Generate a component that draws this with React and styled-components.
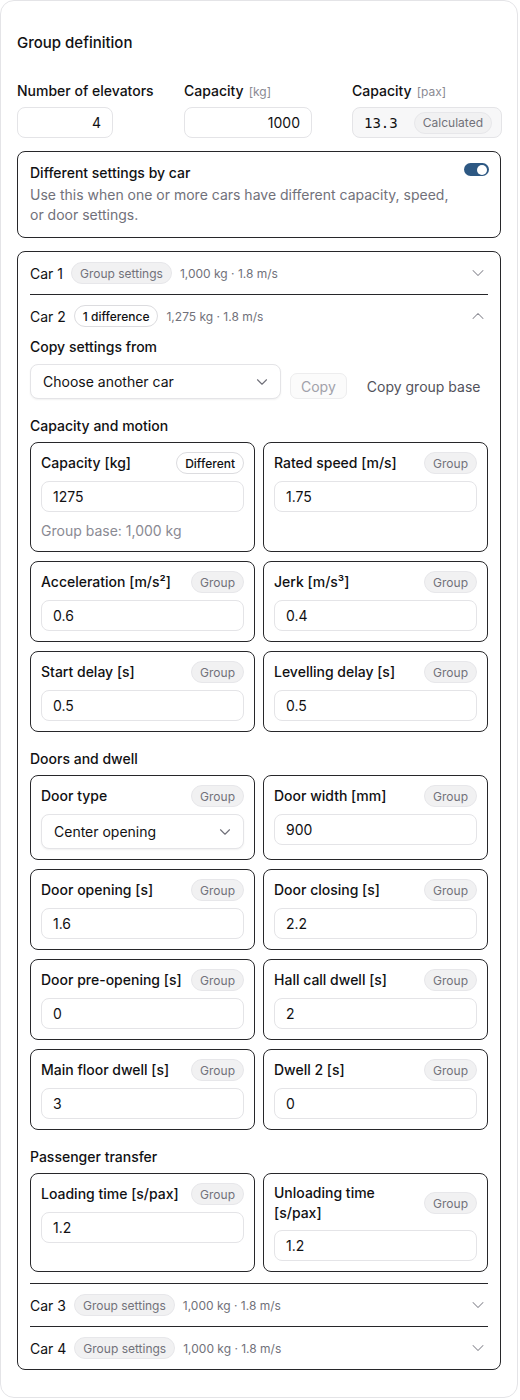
import React, { useState } from 'react';
import styled, { createGlobalStyle } from 'styled-components';
import { ChevronDown, ChevronUp } from 'lucide-react';

const GlobalStyle = createGlobalStyle`
    * { box-sizing: border-box; }
    body {
        margin: 0;
        background: #ffffff;
        font-family: Inter, "Noto Sans", "Liberation Sans", sans-serif;
        color: #111113;
    }
`

const Panel = styled.section`
    width: 518px;
    border: 1px solid #e4e4e7;
    border-radius: 14px;
    background: #ffffff;
    padding: 32px 16px 27px;
    display: flex;
    flex-direction: column;
`

const Title = styled.h2`
    margin: 0;
    font-size: 15px;
    line-height: 20px;
    font-weight: 500;
`

const TopFields = styled.div`
    display: grid;
    grid-template-columns: 150px 151px 150px;
    column-gap: 17px;
    margin-top: 28px;
`

const TopField = styled.div`
    display: flex;
    flex-direction: column;
    gap: 6px;
`

const TopLabel = styled.label`
    font-size: 14px;
    line-height: 20px;
    font-weight: 500;
    white-space: nowrap;
`

const Unit = styled.span`
    font-size: 12px;
    line-height: 1;
    font-weight: 400;
    color: #8a8a93;
    margin-left: 5px;
`

const NumberBox = styled.input`
    width: ${p => p.$w}px;
    height: 31px;
    border: 1px solid #e4e4e7;
    border-radius: 8px;
    padding: 0 11px;
    font: inherit;
    font-size: 14px;
    color: #111113;
    text-align: right;
    background: #fff;
    outline: none;
`

const ReadOnlyBox = styled.div`
    height: 31px;
    border: 1px solid #e4e4e7;
    border-radius: 8px;
    background: #f7f7f8;
    padding: 0 9px 0 11px;
    display: flex;
    align-items: center;
    justify-content: space-between;
`

const Mono = styled.span`
    font-family: "DejaVu Sans Mono", "Liberation Mono", monospace;
    font-size: 14px;
`

const ToggleCard = styled.div`
    margin-top: 13px;
    border: 1px solid #27272a;
    border-radius: 8px;
    padding: 11px 11px 12px 12px;
    display: flex;
    gap: 12px;
    align-items: flex-start;
`

const ToggleText = styled.div`
    flex: 1;
    display: flex;
    flex-direction: column;
    gap: 2px;
`

const StrongLine = styled.div`
    font-size: 14px;
    line-height: 20px;
    font-weight: 500;
`

const Muted = styled.div`
    font-size: 14px;
    line-height: 20px;
    color: #71717a;
`

const Switch = styled.button`
    width: 25px;
    height: 13px;
    padding: 0;
    border: none;
    border-radius: 999px;
    background: ${p => (p.$on ? '#2d5883' : '#d4d4d8')};
    display: flex;
    align-items: center;
    justify-content: ${p => (p.$on ? 'flex-end' : 'flex-start')};
    cursor: pointer;
    &::after {
        content: '';
        width: 10px;
        height: 10px;
        margin: 0 2px;
        border-radius: 50%;
        background: #fff;
    }
`

const CarList = styled.div`
    margin-top: 13px;
    border: 1px solid #27272a;
    border-radius: 8px;
    padding: 0 12px;
`

const CarItem = styled.div`
    & + & {
        border-top: 1px solid #27272a;
    }
`

const CarHeader = styled.div`
    height: 42px;
    display: flex;
    align-items: center;
    gap: 8px;
    cursor: pointer;
    color: #8e8e96;
`

const CarName = styled.span`
    font-size: 14px;
    color: #111113;
`

const CarMeta = styled.span`
    font-size: 12px;
    color: #71717a;
    flex: 1;
`

const Badge = styled.span`
    display: inline-flex;
    align-items: center;
    height: 22px;
    padding: 0 8px;
    border-radius: 999px;
    font-size: 12px;
    white-space: nowrap;
    border: 1px solid ${p => (p.$tone === 'strong' ? '#dcdcdf' : '#e7e7ea')};
    background: ${p => (p.$tone === 'strong' ? '#ffffff' : '#f1f1f2')};
    color: ${p => (p.$tone === 'strong' ? '#111113' : '#71717a')};
    font-weight: ${p => (p.$tone === 'strong' ? 500 : 400)};
`

const CarBody = styled.div`
    padding-bottom: 11px;
    display: flex;
    flex-direction: column;
`

const SectionTitle = styled.div`
    font-size: 14px;
    line-height: 20px;
    font-weight: 500;
    margin-top: ${p => p.$first ? 0 : 17}px;
    margin-bottom: ${p => p.$first ? 7 : 6}px;
`

const CopyRow = styled.div`
    display: flex;
    align-items: flex-end;
    gap: 9px;
`

const SelectBox = styled.div`
    width: ${p => p.$w ? `${p.$w}px` : '100%'};
    flex-shrink: 0;
    height: 35px;
    border: 1px solid #e4e4e7;
    border-radius: 8px;
    background: #fff;
    box-shadow: 0 1px 2px rgba(0, 0, 0, 0.06);
    padding: 0 9px 0 12px;
    display: flex;
    align-items: center;
    justify-content: space-between;
    font-size: 14px;
    color: #111113;
    cursor: pointer;
`

const GhostButton = styled.button`
    height: 26px;
    padding: 0 10px;
    border-radius: 7px;
    font: inherit;
    font-size: 14px;
    white-space: nowrap;
    border: 1px solid ${p => (p.$plain ? 'transparent' : '#ededee')};
    background: ${p => (p.$plain ? 'transparent' : '#fbfbfb')};
    color: ${p => (p.$plain ? '#52525b' : '#a1a1aa')};
`

const FieldGrid = styled.div`
    display: grid;
    grid-template-columns: 1fr 1fr;
    column-gap: 8px;
    row-gap: 9px;
`

const FieldCard = styled.div`
    border: 1px solid #27272a;
    border-radius: 8px;
    padding: 9px 10px 10px;
    display: flex;
    flex-direction: column;
    gap: 7px;
`

const FieldHead = styled.div`
    display: flex;
    align-items: center;
    justify-content: space-between;
    gap: 4px;
    min-height: 22px;
`

const FieldLabel = styled.span`
    font-size: 14px;
    line-height: 20px;
    font-weight: 500;
`

const TextBox = styled.input`
    width: 100%;
    height: 31px;
    border: 1px solid #e4e4e7;
    border-radius: 8px;
    padding: 0 11px;
    font: inherit;
    font-size: 14px;
    color: #111113;
    background: #fff;
    outline: none;
`

const Hint = styled.div`
    margin-top: 2px;
    font-size: 14px;
    line-height: 20px;
    color: #8a8a93;
`

const cars = [
    { id: 1, meta: '1,000 kg · 1.8 m/s', diff: 0 },
    { id: 2, meta: '1,275 kg · 1.8 m/s', diff: 1 },
    { id: 3, meta: '1,000 kg · 1.8 m/s', diff: 0 },
    { id: 4, meta: '1,000 kg · 1.8 m/s', diff: 0 },
];

const sections = [
    {
        title: 'Capacity and motion',
        fields: [
            { label: 'Capacity [kg]', value: '1275', differs: true, hint: 'Group base: 1,000 kg' },
            { label: 'Rated speed [m/s]', value: '1.75' },
            { label: 'Acceleration [m/s²]', value: '0.6' },
            { label: 'Jerk [m/s³]', value: '0.4' },
            { label: 'Start delay [s]', value: '0.5' },
            { label: 'Levelling delay [s]', value: '0.5' },
        ],
    },
    {
        title: 'Doors and dwell',
        fields: [
            { label: 'Door type', value: 'Center opening', select: true },
            { label: 'Door width [mm]', value: '900' },
            { label: 'Door opening [s]', value: '1.6' },
            { label: 'Door closing [s]', value: '2.2' },
            { label: 'Door pre-opening [s]', value: '0' },
            { label: 'Hall call dwell [s]', value: '2' },
            { label: 'Main floor dwell [s]', value: '3' },
            { label: 'Dwell 2 [s]', value: '0' },
        ],
    },
    {
        title: 'Passenger transfer',
        fields: [
            { label: 'Loading time [s/pax]', value: '1.2' },
            { label: 'Unloading time [s/pax]', value: '1.2' },
        ],
    },
];

function Field({ field }) {
    return (
        <FieldCard>
            <FieldHead>
                <FieldLabel>{field.label}</FieldLabel>
                <Badge $tone={field.differs ? 'strong' : 'muted'}>
                    {field.differs ? 'Different' : 'Group'}
                </Badge>
            </FieldHead>
            {field.select ? (
                <SelectBox>
                    <span>{field.value}</span>
                    <ChevronDown size={18} strokeWidth={1.5} color="#71717a" />
                </SelectBox>
            ) : (
                <TextBox defaultValue={field.value} />
            )}
            {field.hint && <Hint>{field.hint}</Hint>}
        </FieldCard>
    );
}

function CarSettings() {
    return (
        <CarBody>
            <SectionTitle $first>Copy settings from</SectionTitle>
            <CopyRow>
                <SelectBox $w={251}>
                    <span>Choose another car</span>
                    <ChevronDown size={18} strokeWidth={1.5} color="#71717a" />
                </SelectBox>
                <GhostButton disabled>Copy</GhostButton>
                <GhostButton $plain>Copy group base</GhostButton>
            </CopyRow>

            {sections.map(section => (
                <React.Fragment key={section.title}>
                    <SectionTitle>{section.title}</SectionTitle>
                    <FieldGrid>
                        {section.fields.map(f => <Field key={f.label} field={f} />)}
                    </FieldGrid>
                </React.Fragment>
            ))}
        </CarBody>
    );
}

export default function App() {
    const [byCar, setByCar] = useState(true);
    const [openCar, setOpenCar] = useState(2);

    return (
        <>
            <GlobalStyle />
            <Panel>
                <Title>Group definition</Title>

                {/* group-wide numbers */}
                <TopFields>
                    <TopField>
                        <TopLabel>Number of elevators</TopLabel>
                        <NumberBox $w={96} defaultValue="4" />
                    </TopField>
                    <TopField>
                        <TopLabel>Capacity<Unit>[kg]</Unit></TopLabel>
                        <NumberBox $w={128} defaultValue="1000" />
                    </TopField>
                    <TopField>
                        <TopLabel>Capacity<Unit>[pax]</Unit></TopLabel>
                        <ReadOnlyBox>
                            <Mono>13.3</Mono>
                            <Badge>Calculated</Badge>
                        </ReadOnlyBox>
                    </TopField>
                </TopFields>

                <ToggleCard>
                    <ToggleText>
                        <StrongLine>Different settings by car</StrongLine>
                        <Muted>
                            Use this when one or more cars have different capacity, speed,
                            or door settings.
                        </Muted>
                    </ToggleText>
                    <Switch $on={byCar} onClick={() => setByCar(!byCar)} aria-label="Different settings by car" />
                </ToggleCard>

                {/* per-car accordion */}
                <CarList>
                    {cars.map(car => {
                        const open = openCar === car.id;
                        return (
                            <CarItem key={car.id}>
                                <CarHeader onClick={() => setOpenCar(open ? null : car.id)}>
                                    <CarName>Car {car.id}</CarName>
                                    <Badge $tone={car.diff ? 'strong' : 'muted'}>
                                        {car.diff ? `${car.diff} difference` : 'Group settings'}
                                    </Badge>
                                    <CarMeta>{car.meta}</CarMeta>
                                    {open
                                        ? <ChevronUp size={20} strokeWidth={1.25} />
                                        : <ChevronDown size={20} strokeWidth={1.25} />}
                                </CarHeader>
                                {open && <CarSettings />}
                            </CarItem>
                        );
                    })}
                </CarList>
            </Panel>
        </>
    );
}
